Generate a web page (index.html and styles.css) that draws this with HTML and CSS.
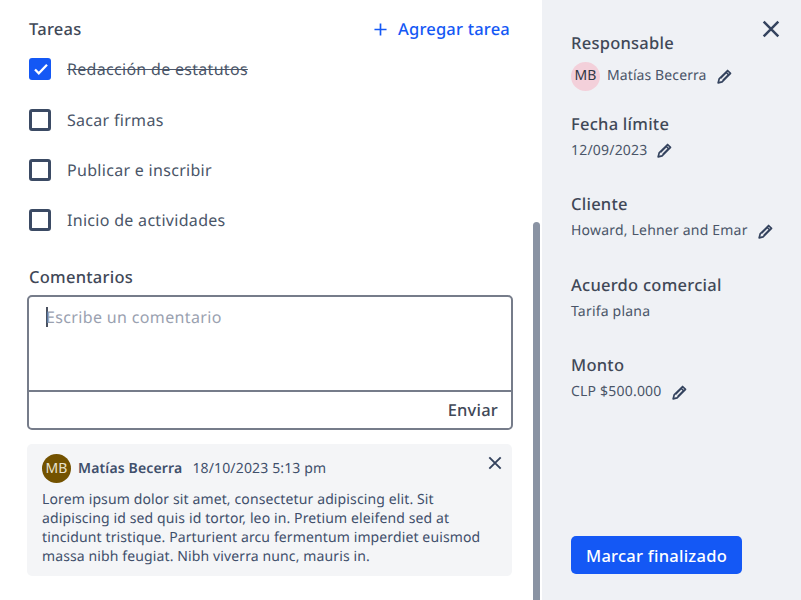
FILE: index.html
```html
<!DOCTYPE html>
<html lang="es">
<head>
<meta charset="utf-8">
<title>Tarea</title>
<link rel="stylesheet" href="styles.css">
</head>
<body>
<svg class="sprite" width="0" height="0" aria-hidden="true">
  <symbol id="pencil" viewBox="0 0 16 16">
    <path d="M11.3 1.6 14.4 4.7 5.4 13.7 1.2 14.8 2.3 10.6Z" fill="none" stroke="currentColor" stroke-width="1.8" stroke-linejoin="round"/>
    <path d="M9.6 3.3 12.7 6.4" stroke="currentColor" stroke-width="1.7"/>
    <path d="M4 9.8 9.8 4M6.2 12 12 6.2" stroke="currentColor" stroke-width="1.4"/>
  </symbol>
  <symbol id="cross" viewBox="0 0 16 16">
    <path d="M1.5 1.5 14.5 14.5M14.5 1.5 1.5 14.5" fill="none" stroke="currentColor" stroke-width="2.200"/>
  </symbol>
</svg>
<div class="layout">
  <main class="main">
    <header class="tasks-head">
      <h2 class="heading">Tareas</h2>
      <a class="add-task">
        <svg class="plus" viewBox="0 0 14 14"><path d="M7 .5V13.500M.5 7H13.500" fill="none" stroke="currentColor" stroke-width="1.8"/></svg>
        Agregar tarea
      </a>
    </header>
    <ul class="tasks">
      <li class="task done">
        <span class="check checked"><svg viewBox="0 0 22 22"><path d="M6 11.500 9.800 15.300 18 6.800" fill="none" stroke="#fff" stroke-width="2.300"/></svg></span>
        <span class="task-label">Redacción de estatutos</span>
      </li>
      <li class="task"><span class="check"></span><span class="task-label">Sacar firmas</span></li>
      <li class="task"><span class="check"></span><span class="task-label">Publicar e inscribir</span></li>
      <li class="task"><span class="check"></span><span class="task-label">Inicio de actividades</span></li>
    </ul>
    <h2 class="heading comments-title">Comentarios</h2>
    <div class="composer">
      <div class="composer-input"><span class="caret"></span><span class="placeholder">Escribe un comentario</span></div>
      <div class="composer-foot"><span class="send">Enviar</span></div>
    </div>
    <article class="comment">
      <div class="comment-head">
        <span class="avatar avatar-brown">MB</span>
        <strong class="comment-author">Matías Becerra</strong>
        <span class="comment-date">18/10/2023 5:13 pm</span>
        <svg class="comment-close"><use href="#cross"/></svg>
      </div>
      <p class="comment-text">Lorem ipsum dolor sit amet, consectetur adipiscing elit. Sit adipiscing id sed quis id tortor, leo in. Pretium eleifend sed at tincidunt tristique. Parturient arcu fermentum imperdiet euismod massa nibh feugiat. Nibh viverra nunc, mauris in.</p>
    </article>
    <div class="scrollbar"></div>
  </main>
  <aside class="side">
    <svg class="side-close"><use href="#cross"/></svg>
    <section class="field">
      <h3 class="heading">Responsable</h3>
      <div class="value value-person"><span class="avatar avatar-pink">MB</span><span>Matías Becerra</span><svg class="edit"><use href="#pencil"/></svg></div>
    </section>
    <section class="field">
      <h3 class="heading">Fecha límite</h3>
      <div class="value"><span>12/09/2023</span><svg class="edit"><use href="#pencil"/></svg></div>
    </section>
    <section class="field">
      <h3 class="heading">Cliente</h3>
      <div class="value"><span>Howard, Lehner and Emar</span><svg class="edit"><use href="#pencil"/></svg></div>
    </section>
    <section class="field">
      <h3 class="heading">Acuerdo comercial</h3>
      <div class="value"><span>Tarifa plana</span></div>
    </section>
    <section class="field">
      <h3 class="heading">Monto</h3>
      <div class="value"><span>CLP $500.000</span><svg class="edit"><use href="#pencil"/></svg></div>
    </section>
    <button class="finish">Marcar finalizado</button>
  </aside>
</div>
</body>
</html>
```
FILE: styles.css
```css
* { box-sizing: border-box; }
html, body { margin: 0; height: 100%; }
body {
  font-family: "Noto Sans", sans-serif;
  color: #4a5568;
  background: #fff;
  overflow: hidden;
  text-rendering: geometricPrecision;
  letter-spacing: 0.2px;
}
.sprite { position: absolute; }
.layout { display: flex; height: 600px; width: 801px; }
.main {
  position: relative;
  width: 542px;
  flex: none;
  padding: 17px 30px 0 27px;
}
.side {
  position: relative;
  flex: 1;
  background: #eff1f5;
  padding: 31px 20px 26px 29px;
  display: flex;
  flex-direction: column;
}
.heading {
  margin: 0;
  font-size: 16.5px;
  line-height: 24px;
  font-weight: 500;
  letter-spacing: 0.25px;
  color: #3f4857;
}
.tasks-head {
  display: flex;
  justify-content: space-between;
  align-items: center;
  padding: 0 2px;
}
.add-task {
  display: flex;
  align-items: center;
  gap: 11px;
  font-size: 16.5px;
  line-height: 24px;
  font-weight: 500;
  color: #1458f5;
}
.plus { width: 13px; height: 13px; }
.tasks { list-style: none; margin: 3px 0 0; padding: 0 0 0 2px; }
.task {
  display: flex;
  align-items: center;
  gap: 16px;
  height: 50.4px;
  font-size: 16px;
  letter-spacing: 0.3px;
  color: #4a5568;
}
.task.done .task-label { text-decoration: line-through; }
.check {
  width: 22px;
  height: 22px;
  border: 3px solid #3b4a64;
  border-radius: 3px;
  flex: none;
}
.check.checked { background: #1458f5; border: 0; }
.check svg { display: block; width: 22px; height: 22px; }
.comments-title { margin: 19px 0 6px 2px; }
.composer {
  border: 2px solid #767c8a;
  border-radius: 5px;
  height: 135px;
  width: 486px;
  display: flex;
  flex-direction: column;
}
.composer-input {
  flex: 1;
  border-bottom: 2px solid #767c8a;
  padding: 8px 17px;
  display: flex;
  align-items: flex-start;
  font-size: 16px;
  line-height: 24px;
  letter-spacing: 0.35px;
}
.caret { width: 1.5px; height: 20px; margin-top: 2px; background: #4a5160; margin-right: -1.5px; }
.placeholder { color: #9aa1b0; }
.composer-foot {
  height: 36px;
  display: flex;
  align-items: center;
  justify-content: flex-end;
  padding-right: 13px;
}
.send { font-size: 16.5px; font-weight: 500; color: #3f4857; }
.comment {
  margin-top: 14px;
  background: #f4f5f7;
  border-radius: 5px;
  height: 132px;
  padding: 10px 15px;
  color: #3f4f6b;
}
.comment-head {
  position: relative;
  display: flex;
  align-items: center;
  height: 30px;
  font-size: 14px;
}
.avatar {
  width: 29px;
  height: 29px;
  border-radius: 50%;
  flex: none;
  display: flex;
  align-items: center;
  justify-content: center;
  font-size: 14px;
  letter-spacing: 0;
}
.avatar-brown { background: #735200; color: #e9e2cf; }
.avatar-pink { background: #f3d0da; color: #2f3745; }
.comment-author { margin-left: 7px; font-weight: 600; color: #3f4f6b; letter-spacing: 0.15px; }
.comment-date { margin-left: 10px; letter-spacing: 0.15px; }
.comment-close { position: absolute; right: -5px; top: 2px; width: 14px; height: 14px; color: #34435e; }
.comment-text { margin: 6px 0 0; font-size: 14px; line-height: 19px; width: 445px; letter-spacing: 0.12px; }
.scrollbar {
  position: absolute;
  left: 533px;
  top: 222px;
  bottom: 0;
  width: 7px;
  background: #8a93a3;
  border-radius: 4px 4px 0 0;
}
.side-close { position: absolute; top: 20px; left: 220px; width: 18px; height: 18px; color: #34435e; }
.field { height: 80.5px; }
.value {
  display: flex;
  align-items: center;
  gap: 10px;
  font-size: 14px;
  line-height: 20px;
  height: 30px;
  color: #4a5568;
}
.value-person { gap: 7px; margin-top: 6px; letter-spacing: 0.1px; }
.edit { width: 15px; height: 15px; color: #34435e; }
.value-person .edit { margin-left: 3px; }
.finish {
  margin-top: auto;
  align-self: flex-start;
  height: 38px;
  width: 171px;
  border: 0;
  border-radius: 5px;
  background: #1458f5;
  color: #fff;
  font: 500 16.5px "Noto Sans", sans-serif;
  letter-spacing: 0.25px;
  padding: 0;
}
```
